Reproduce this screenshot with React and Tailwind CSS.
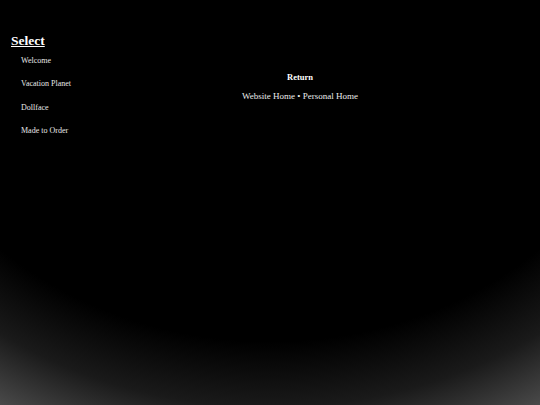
export default function App() {
  const links = ["Welcome", "Vacation Planet", "Dollface", "Made to Order"];

  return (
    <div
      className="min-h-screen w-full flex text-white bg-[radial-gradient(539px_468px_at_50%_0%,#000_73%,#1a1a1a_87%,#4a4a4a_100%)]"
      style={{ fontFamily: '"Liberation Serif", "Times New Roman", serif' }}
    >
      {/* ===== left menu ===== */}
      <div className="w-[60px] shrink-0 pl-[11px] pt-[34px] whitespace-nowrap">
        <h1 className="text-[13.5px] leading-none font-bold underline mb-[1px]">Select</h1>
        <ul className="pl-[10px]">
          {links.map((l) => (
            <li key={l} className="text-[8px] h-[23.5px] leading-[23.5px] text-[#e8e8e8]">
              {l}
            </li>
          ))}
        </ul>
      </div>

      {/* ===== main ===== */}
      <div className="flex-1 text-center pt-[73px]">
        <p className="text-[8.5px] leading-none font-bold">Return</p>
        <p className="text-[9px] leading-none mt-[10.4px] text-[#ececec]">
          Website Home &bull; Personal Home
        </p>
      </div>
    </div>
  );
}
